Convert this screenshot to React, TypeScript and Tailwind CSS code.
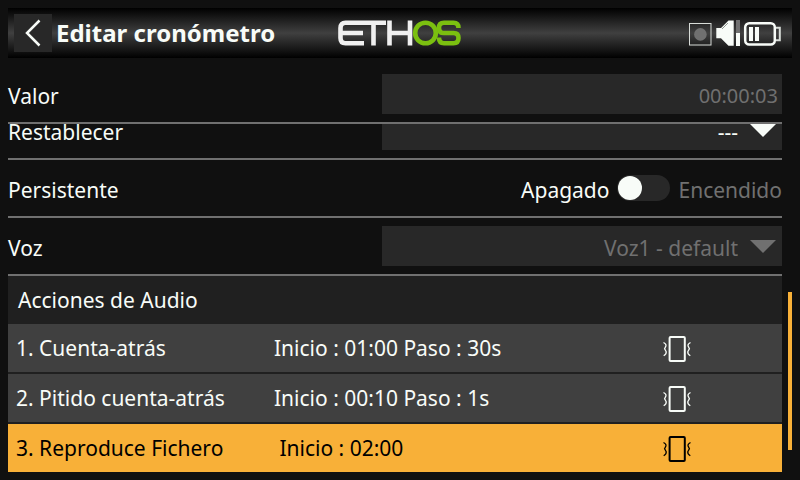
import type { ReactNode } from "react";

const actions = [
  { name: "1. Cuenta-atrás", detail: "Inicio : 01:00 Paso : 30s", selected: false },
  { name: "2. Pitido cuenta-atrás", detail: "Inicio : 00:10 Paso : 1s", selected: false },
  { name: "3. Reproduce Fichero", detail: "\u00a0Inicio : 02:00", selected: true },
];

function EthosLogo() {
  return (
    <svg viewBox="0 0 124 26" width="124" height="26" fill="none" strokeWidth="4.6" role="img" aria-label="ETHOS">
      <g stroke="#f0f0f0">
        <path d="M48 2.800H7.500Q2.500 2.800 2.500 8V18Q2.500 23.200 7.500 23.200H26M2.500 13H25" />
        <path d="M35.500 2.800V25.500M51.500 0.500V25.500M51.500 13H72M72 0.500V25.500" />
      </g>
      <g stroke="#7bc010">
        <circle cx="87.500" cy="13" r="10.300" />
        <path d="M120.500 8Q120.500 2.800 115.500 2.800H106Q101 2.800 101 7.900Q101 13 106 13H115.500Q120.500 13 120.500 18Q120.500 23.200 115.500 23.200H106Q101 23.200 101 17.500" />
      </g>
    </svg>
  );
}

function StatusIcons() {
  return (
    <svg viewBox="0 0 94 28" width="94" height="28" fill="none" role="img" aria-label="Estado">
      <rect x="1.500" y="4.500" width="21.500" height="21.500" stroke="#d8dcd8" />
      <circle cx="12.400" cy="15.400" r="6.300" fill="#707070" />
      <path d="M28.300 9H33L40.500 1.500H45.700V26.700H40.500L33 19.300H28.300Z" fill="#f8fcf8" />
      <path d="M34 10L40 4" stroke="#909890" />
      <path d="M48 1H52V14H48Z" fill="#707070" />
      <path d="M48 14H52V27H48Z" fill="#f8fcf8" />
      <rect x="57.200" y="4.200" width="29.600" height="21.300" rx="4" stroke="#f8fcf8" strokeWidth="2.500" />
      <path d="M88 8.700H91.800V21.300H88" stroke="#d8dcd8" strokeWidth="2" />
      <path d="M61 8H65V22H61ZM67 8H71V22H67Z" fill="#f8fcf8" />
    </svg>
  );
}

function VibrateIcon() {
  return (
    <svg viewBox="0 0 30 28" width="30" height="28" fill="none" stroke="currentColor" role="img" aria-label="Vibración">
      <rect x="7.600" y="3" width="15.200" height="24" rx="1" strokeWidth="2" />
      <path
        d="M1.500 8.500Q4.500 10 3.900 12L2.600 14.800L4.200 17.800Q4.500 20 1.700 21.800M28.500 8.500Q25.500 10 26.100 12L27.400 14.800L25.800 17.800Q25.500 20 28.300 21.800"
        strokeWidth="1.300"
      />
    </svg>
  );
}

function Row({ label, htmlFor, children }: { label: string; htmlFor: string; children: ReactNode }) {
  return (
    <div className="flex shrink-0 items-center justify-between border-b-2 border-[#707070] py-2">
      <label htmlFor={htmlFor} className="flex-1 pt-1">{label}</label>
      {children}
    </div>
  );
}

function Dropdown({ id, value, disabled = false }: { id: string; value: string; disabled?: boolean }) {
  return (
    <div className="relative h-10 w-[400px]">
      <select
        id={id}
        defaultValue={value}
        disabled={disabled}
        className="h-10 w-full appearance-none bg-[#282828] pr-11 pt-1 text-right [text-align-last:right] opacity-100 outline-none disabled:text-[#707070]"
      >
        <option>{value}</option>
      </select>
      <svg viewBox="0 0 26 13" width="26" height="13" className="pointer-events-none absolute right-1.5 top-3.5" aria-hidden="true">
        <path d="M0 0H26L13 13Z" fill={disabled ? "#707070" : "#f8fcf8"} />
      </svg>
    </div>
  );
}

export default function App() {
  return (
    <div className="min-h-screen bg-[#101010] px-2 pt-2 font-['Noto_Sans',sans-serif] text-[21px] leading-7 text-[#f8fcf8]">
      <header className="grid h-[50px] grid-cols-[1fr_auto_1fr] items-center bg-linear-to-b/srgb from-black via-[#404040] to-black px-1.5">
        <div className="flex items-center gap-1">
          <button type="button" aria-label="Volver" className="flex size-[38px] items-center justify-center bg-[#282828]">
            <svg viewBox="1 0 16 28" width="16" height="28" fill="none" stroke="#f8fcf8" strokeWidth="2.500">
              <path d="M15.500 1.500L3 14L15.500 26.500" />
            </svg>
          </button>
          <h1 className="whitespace-nowrap text-[24px] font-bold">Editar cronómetro</h1>
        </div>
        <EthosLogo />
        <div className="flex justify-end pr-1">
          <StatusIcons />
        </div>
      </header>

      <div className="flex gap-1.5 pt-2">
        <main className="min-w-0 flex-1">
          <Row label="Valor" htmlFor="valor">
            <input id="valor" disabled defaultValue="00:00:03" className="h-10 w-[400px] bg-[#282828] px-1 pt-0.5 text-right text-[20px] text-[#707070]" />
          </Row>
          <div className="flex h-9 flex-col justify-end overflow-hidden">
            <Row label="Restablecer" htmlFor="restablecer">
              <Dropdown id="restablecer" value="---" />
            </Row>
          </div>
          <Row label="Persistente" htmlFor="persistente">
            <div className="flex h-10 items-center gap-2">
              <span className="pt-1">Apagado</span>
              <input
                id="persistente"
                type="checkbox"
                role="switch"
                className="h-[26px] w-[53px] appearance-none rounded-full bg-[#282828] p-px before:block before:size-6 before:rounded-full before:bg-[#f8fcf8] checked:before:ml-auto"
              />
              <span className="pt-1 text-[#707070]">Encendido</span>
            </div>
          </Row>
          <Row label="Voz" htmlFor="voz">
            <Dropdown id="voz" value="Voz1 - default" disabled />
          </Row>
          <section className="bg-[#202020]">
            <h2 className="flex h-12 items-center px-2.5">Acciones de Audio</h2>
            <table className="w-full table-fixed border-separate border-spacing-0">
              <tbody>
                {actions.map((action) => (
                  <tr key={action.name} className="group">
                    <td className="w-1/3 border-[#202020] p-0 group-not-first:border-t-2">
                      <div className={`flex h-12 items-center whitespace-nowrap pl-2 ${action.selected ? "bg-[#f8b038] text-black" : "bg-[#404040]"}`}>
                        {action.name}
                      </div>
                    </td>
                    <td className="border-[#202020] p-0 group-not-first:border-t-2">
                      <div className={`flex h-12 items-center whitespace-nowrap pl-2 ${action.selected ? "bg-[#f8b038] text-black" : "bg-[#404040]"}`}>
                        {action.detail}
                      </div>
                    </td>
                    <td className="w-[120px] border-[#202020] p-0 group-not-first:border-t-2">
                      <div className={`flex h-12 items-center ${action.selected ? "bg-[#f8b038] text-black" : "bg-[#404040]"}`}>
                        <VibrateIcon />
                      </div>
                    </td>
                  </tr>
                ))}
              </tbody>
            </table>
          </section>
        </main>
        <div className="flex w-1 flex-col justify-end pb-[22px]">
          <div className="h-[158px] bg-[#f8b038]" />
        </div>
      </div>
    </div>
  );
}
